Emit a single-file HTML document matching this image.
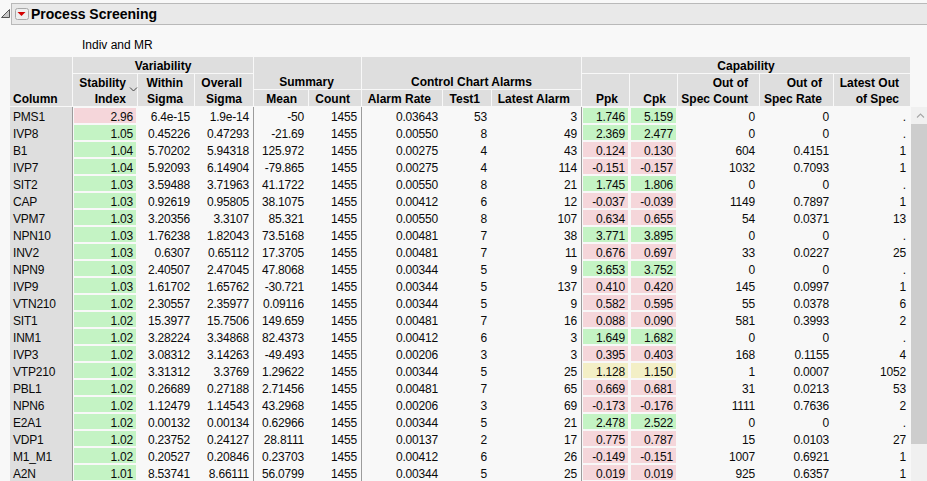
<!DOCTYPE html><html><head><meta charset="utf-8"><style>
html,body{margin:0;padding:0;}
body{width:927px;height:481px;overflow:hidden;background:#f8f8f8;position:relative;font-family:"Liberation Sans",sans-serif;color:#0a0a0a;}
.a{position:absolute;}
.h{position:absolute;background:#dedede;}
.t{position:absolute;white-space:nowrap;font-size:12px;line-height:17px;letter-spacing:-0.2px;}
.b{position:absolute;white-space:nowrap;font-size:12px;font-weight:bold;line-height:16px;color:#000;}
.r{text-align:right;}
.c{text-align:center;}

</style></head><body>
<div class="a" style="left:11px;top:3px;width:920px;height:20px;background:#e9e9e9;border:1px solid #b9b9b9;border-right:none;"></div>
<svg class="a" style="left:0;top:7px" width="12" height="12" viewBox="0 0 12 12"><path d="M1.5 10.5 L9.5 2.5 L9.5 10.5 Z" fill="#c8c8c8" stroke="#555" stroke-width="1" stroke-linejoin="round"/></svg>
<svg class="a" style="left:15px;top:8px" width="14" height="12" viewBox="0 0 14 12"><rect x="0.5" y="0.5" width="13" height="11" rx="2" fill="#eeeeee" stroke="#a8a8a8"/><path d="M2.5 4 L10.5 4 L6.5 8 Z" fill="#d40000"/></svg>
<div class="a" style="left:31px;top:5px;font-size:14px;font-weight:bold;line-height:18px;white-space:nowrap;color:#000">Process Screening</div>
<div class="a" style="left:82px;top:38px;font-size:12px;line-height:15px;white-space:nowrap;color:#000">Indiv and MR</div>
<div class="h" style="left:10px;top:57px;width:62px;height:49px"></div>
<div class="h" style="left:73px;top:57px;width:180px;height:16px"></div>
<div class="b c" style="left:73px;top:58px;width:180px">Variability</div>
<div class="h" style="left:254px;top:57px;width:107px;height:32px"></div>
<div class="b c" style="left:253px;top:74px;width:107px">Summary</div>
<div class="h" style="left:362px;top:57px;width:219px;height:32px"></div>
<div class="b c" style="left:362px;top:74px;width:219px">Control Chart Alarms</div>
<div class="h" style="left:582px;top:57px;width:328px;height:16px"></div>
<div class="b c" style="left:582px;top:58px;width:328px">Capability</div>
<div class="b" style="left:13px;top:91px">Column</div>
<div class="h" style="left:73px;top:74px;width:64px;height:32px"></div>
<div class="b r" style="left:73px;top:75px;width:53px">Stability<br>Index</div>
<div class="h" style="left:138px;top:74px;width:56px;height:32px"></div>
<div class="b r" style="left:138px;top:75px;width:45px">Within<br>Sigma</div>
<div class="h" style="left:195px;top:74px;width:58px;height:32px"></div>
<div class="b r" style="left:195px;top:75px;width:47px">Overall<br>Sigma</div>
<div class="h" style="left:254px;top:90px;width:54px;height:16px"></div>
<div class="b r" style="left:254px;top:91px;width:43px">Mean</div>
<div class="h" style="left:309px;top:90px;width:52px;height:16px"></div>
<div class="b r" style="left:309px;top:91px;width:41px">Count</div>
<div class="h" style="left:362px;top:90px;width:80px;height:16px"></div>
<div class="b r" style="left:362px;top:91px;width:69px">Alarm Rate</div>
<div class="h" style="left:443px;top:90px;width:48px;height:16px"></div>
<div class="b r" style="left:443px;top:91px;width:37px">Test1</div>
<div class="h" style="left:492px;top:90px;width:89px;height:16px"></div>
<div class="b r" style="left:492px;top:91px;width:78px">Latest Alarm</div>
<div class="h" style="left:582px;top:74px;width:47px;height:32px"></div>
<div class="b r" style="left:582px;top:91px;width:36px">Ppk</div>
<div class="h" style="left:630px;top:74px;width:47px;height:32px"></div>
<div class="b r" style="left:630px;top:91px;width:36px">Cpk</div>
<div class="h" style="left:678px;top:74px;width:81px;height:32px"></div>
<div class="b r" style="left:678px;top:75px;width:70px">Out of<br>Spec Count</div>
<div class="h" style="left:760px;top:74px;width:73px;height:32px"></div>
<div class="b r" style="left:760px;top:75px;width:62px">Out of<br>Spec Rate</div>
<div class="h" style="left:834px;top:74px;width:76px;height:32px"></div>
<div class="b r" style="left:834px;top:75px;width:65px">Latest Out<br>of Spec</div>
<svg class="a" style="left:129px;top:86px" width="9" height="7" viewBox="0 0 9 7"><path d="M1 1.5 L4.5 5 L8 1.5" fill="none" stroke="#444" stroke-width="1"/></svg>
<div class="h" style="left:10px;top:107px;width:62px;height:374px"></div>
<div class="a" style="left:72px;top:107px;width:1px;height:374px;background:#9c9c9c"></div>
<div class="a" style="left:253px;top:107px;width:1px;height:374px;background:#9c9c9c"></div>
<div class="a" style="left:361px;top:107px;width:1px;height:374px;background:#9c9c9c"></div>
<div class="a" style="left:581px;top:107px;width:1px;height:374px;background:#9c9c9c"></div>
<div class="t" style="left:13px;top:109px">PMS1</div>
<div class="a" style="left:74px;top:108px;width:62px;height:15px;background:#f5d6da"></div>
<div class="t r" style="left:73px;top:109px;width:60px">2.96</div>
<div class="t r" style="left:138px;top:109px;width:52px">6.4e-15</div>
<div class="t r" style="left:195px;top:109px;width:54px">1.9e-14</div>
<div class="t r" style="left:254px;top:109px;width:50px">-50</div>
<div class="t r" style="left:309px;top:109px;width:48px">1455</div>
<div class="t r" style="left:362px;top:109px;width:76px">0.03643</div>
<div class="t r" style="left:443px;top:109px;width:44px">53</div>
<div class="t r" style="left:492px;top:109px;width:85px">3</div>
<div class="a" style="left:583px;top:108px;width:45px;height:15px;background:#c4f3c4"></div>
<div class="t r" style="left:582px;top:109px;width:43px">1.746</div>
<div class="a" style="left:631px;top:108px;width:45px;height:15px;background:#c4f3c4"></div>
<div class="t r" style="left:630px;top:109px;width:43px">5.159</div>
<div class="t r" style="left:678px;top:109px;width:77px">0</div>
<div class="t r" style="left:760px;top:109px;width:69px">0</div>
<div class="t r" style="left:834px;top:109px;width:72px">.</div>
<div class="t" style="left:13px;top:126px">IVP8</div>
<div class="a" style="left:74px;top:125px;width:62px;height:15px;background:#c4f3c4"></div>
<div class="t r" style="left:73px;top:126px;width:60px">1.05</div>
<div class="t r" style="left:138px;top:126px;width:52px">0.45226</div>
<div class="t r" style="left:195px;top:126px;width:54px">0.47293</div>
<div class="t r" style="left:254px;top:126px;width:50px">-21.69</div>
<div class="t r" style="left:309px;top:126px;width:48px">1455</div>
<div class="t r" style="left:362px;top:126px;width:76px">0.00550</div>
<div class="t r" style="left:443px;top:126px;width:44px">8</div>
<div class="t r" style="left:492px;top:126px;width:85px">49</div>
<div class="a" style="left:583px;top:125px;width:45px;height:15px;background:#c4f3c4"></div>
<div class="t r" style="left:582px;top:126px;width:43px">2.369</div>
<div class="a" style="left:631px;top:125px;width:45px;height:15px;background:#c4f3c4"></div>
<div class="t r" style="left:630px;top:126px;width:43px">2.477</div>
<div class="t r" style="left:678px;top:126px;width:77px">0</div>
<div class="t r" style="left:760px;top:126px;width:69px">0</div>
<div class="t r" style="left:834px;top:126px;width:72px">.</div>
<div class="t" style="left:13px;top:143px">B1</div>
<div class="a" style="left:74px;top:142px;width:62px;height:15px;background:#c4f3c4"></div>
<div class="t r" style="left:73px;top:143px;width:60px">1.04</div>
<div class="t r" style="left:138px;top:143px;width:52px">5.70202</div>
<div class="t r" style="left:195px;top:143px;width:54px">5.94318</div>
<div class="t r" style="left:254px;top:143px;width:50px">125.972</div>
<div class="t r" style="left:309px;top:143px;width:48px">1455</div>
<div class="t r" style="left:362px;top:143px;width:76px">0.00275</div>
<div class="t r" style="left:443px;top:143px;width:44px">4</div>
<div class="t r" style="left:492px;top:143px;width:85px">43</div>
<div class="a" style="left:583px;top:142px;width:45px;height:15px;background:#f5d6da"></div>
<div class="t r" style="left:582px;top:143px;width:43px">0.124</div>
<div class="a" style="left:631px;top:142px;width:45px;height:15px;background:#f5d6da"></div>
<div class="t r" style="left:630px;top:143px;width:43px">0.130</div>
<div class="t r" style="left:678px;top:143px;width:77px">604</div>
<div class="t r" style="left:760px;top:143px;width:69px">0.4151</div>
<div class="t r" style="left:834px;top:143px;width:72px">1</div>
<div class="t" style="left:13px;top:160px">IVP7</div>
<div class="a" style="left:74px;top:159px;width:62px;height:15px;background:#c4f3c4"></div>
<div class="t r" style="left:73px;top:160px;width:60px">1.04</div>
<div class="t r" style="left:138px;top:160px;width:52px">5.92093</div>
<div class="t r" style="left:195px;top:160px;width:54px">6.14904</div>
<div class="t r" style="left:254px;top:160px;width:50px">-79.865</div>
<div class="t r" style="left:309px;top:160px;width:48px">1455</div>
<div class="t r" style="left:362px;top:160px;width:76px">0.00275</div>
<div class="t r" style="left:443px;top:160px;width:44px">4</div>
<div class="t r" style="left:492px;top:160px;width:85px">114</div>
<div class="a" style="left:583px;top:159px;width:45px;height:15px;background:#f5d6da"></div>
<div class="t r" style="left:582px;top:160px;width:43px">-0.151</div>
<div class="a" style="left:631px;top:159px;width:45px;height:15px;background:#f5d6da"></div>
<div class="t r" style="left:630px;top:160px;width:43px">-0.157</div>
<div class="t r" style="left:678px;top:160px;width:77px">1032</div>
<div class="t r" style="left:760px;top:160px;width:69px">0.7093</div>
<div class="t r" style="left:834px;top:160px;width:72px">1</div>
<div class="t" style="left:13px;top:177px">SIT2</div>
<div class="a" style="left:74px;top:176px;width:62px;height:15px;background:#c4f3c4"></div>
<div class="t r" style="left:73px;top:177px;width:60px">1.03</div>
<div class="t r" style="left:138px;top:177px;width:52px">3.59488</div>
<div class="t r" style="left:195px;top:177px;width:54px">3.71963</div>
<div class="t r" style="left:254px;top:177px;width:50px">41.1722</div>
<div class="t r" style="left:309px;top:177px;width:48px">1455</div>
<div class="t r" style="left:362px;top:177px;width:76px">0.00550</div>
<div class="t r" style="left:443px;top:177px;width:44px">8</div>
<div class="t r" style="left:492px;top:177px;width:85px">21</div>
<div class="a" style="left:583px;top:176px;width:45px;height:15px;background:#c4f3c4"></div>
<div class="t r" style="left:582px;top:177px;width:43px">1.745</div>
<div class="a" style="left:631px;top:176px;width:45px;height:15px;background:#c4f3c4"></div>
<div class="t r" style="left:630px;top:177px;width:43px">1.806</div>
<div class="t r" style="left:678px;top:177px;width:77px">0</div>
<div class="t r" style="left:760px;top:177px;width:69px">0</div>
<div class="t r" style="left:834px;top:177px;width:72px">.</div>
<div class="t" style="left:13px;top:194px">CAP</div>
<div class="a" style="left:74px;top:193px;width:62px;height:15px;background:#c4f3c4"></div>
<div class="t r" style="left:73px;top:194px;width:60px">1.03</div>
<div class="t r" style="left:138px;top:194px;width:52px">0.92619</div>
<div class="t r" style="left:195px;top:194px;width:54px">0.95805</div>
<div class="t r" style="left:254px;top:194px;width:50px">38.1075</div>
<div class="t r" style="left:309px;top:194px;width:48px">1455</div>
<div class="t r" style="left:362px;top:194px;width:76px">0.00412</div>
<div class="t r" style="left:443px;top:194px;width:44px">6</div>
<div class="t r" style="left:492px;top:194px;width:85px">12</div>
<div class="a" style="left:583px;top:193px;width:45px;height:15px;background:#f5d6da"></div>
<div class="t r" style="left:582px;top:194px;width:43px">-0.037</div>
<div class="a" style="left:631px;top:193px;width:45px;height:15px;background:#f5d6da"></div>
<div class="t r" style="left:630px;top:194px;width:43px">-0.039</div>
<div class="t r" style="left:678px;top:194px;width:77px">1149</div>
<div class="t r" style="left:760px;top:194px;width:69px">0.7897</div>
<div class="t r" style="left:834px;top:194px;width:72px">1</div>
<div class="t" style="left:13px;top:211px">VPM7</div>
<div class="a" style="left:74px;top:210px;width:62px;height:15px;background:#c4f3c4"></div>
<div class="t r" style="left:73px;top:211px;width:60px">1.03</div>
<div class="t r" style="left:138px;top:211px;width:52px">3.20356</div>
<div class="t r" style="left:195px;top:211px;width:54px">3.3107</div>
<div class="t r" style="left:254px;top:211px;width:50px">85.321</div>
<div class="t r" style="left:309px;top:211px;width:48px">1455</div>
<div class="t r" style="left:362px;top:211px;width:76px">0.00550</div>
<div class="t r" style="left:443px;top:211px;width:44px">8</div>
<div class="t r" style="left:492px;top:211px;width:85px">107</div>
<div class="a" style="left:583px;top:210px;width:45px;height:15px;background:#f5d6da"></div>
<div class="t r" style="left:582px;top:211px;width:43px">0.634</div>
<div class="a" style="left:631px;top:210px;width:45px;height:15px;background:#f5d6da"></div>
<div class="t r" style="left:630px;top:211px;width:43px">0.655</div>
<div class="t r" style="left:678px;top:211px;width:77px">54</div>
<div class="t r" style="left:760px;top:211px;width:69px">0.0371</div>
<div class="t r" style="left:834px;top:211px;width:72px">13</div>
<div class="t" style="left:13px;top:228px">NPN10</div>
<div class="a" style="left:74px;top:227px;width:62px;height:15px;background:#c4f3c4"></div>
<div class="t r" style="left:73px;top:228px;width:60px">1.03</div>
<div class="t r" style="left:138px;top:228px;width:52px">1.76238</div>
<div class="t r" style="left:195px;top:228px;width:54px">1.82043</div>
<div class="t r" style="left:254px;top:228px;width:50px">73.5168</div>
<div class="t r" style="left:309px;top:228px;width:48px">1455</div>
<div class="t r" style="left:362px;top:228px;width:76px">0.00481</div>
<div class="t r" style="left:443px;top:228px;width:44px">7</div>
<div class="t r" style="left:492px;top:228px;width:85px">38</div>
<div class="a" style="left:583px;top:227px;width:45px;height:15px;background:#c4f3c4"></div>
<div class="t r" style="left:582px;top:228px;width:43px">3.771</div>
<div class="a" style="left:631px;top:227px;width:45px;height:15px;background:#c4f3c4"></div>
<div class="t r" style="left:630px;top:228px;width:43px">3.895</div>
<div class="t r" style="left:678px;top:228px;width:77px">0</div>
<div class="t r" style="left:760px;top:228px;width:69px">0</div>
<div class="t r" style="left:834px;top:228px;width:72px">.</div>
<div class="t" style="left:13px;top:245px">INV2</div>
<div class="a" style="left:74px;top:244px;width:62px;height:15px;background:#c4f3c4"></div>
<div class="t r" style="left:73px;top:245px;width:60px">1.03</div>
<div class="t r" style="left:138px;top:245px;width:52px">0.6307</div>
<div class="t r" style="left:195px;top:245px;width:54px">0.65112</div>
<div class="t r" style="left:254px;top:245px;width:50px">17.3705</div>
<div class="t r" style="left:309px;top:245px;width:48px">1455</div>
<div class="t r" style="left:362px;top:245px;width:76px">0.00481</div>
<div class="t r" style="left:443px;top:245px;width:44px">7</div>
<div class="t r" style="left:492px;top:245px;width:85px">11</div>
<div class="a" style="left:583px;top:244px;width:45px;height:15px;background:#f5d6da"></div>
<div class="t r" style="left:582px;top:245px;width:43px">0.676</div>
<div class="a" style="left:631px;top:244px;width:45px;height:15px;background:#f5d6da"></div>
<div class="t r" style="left:630px;top:245px;width:43px">0.697</div>
<div class="t r" style="left:678px;top:245px;width:77px">33</div>
<div class="t r" style="left:760px;top:245px;width:69px">0.0227</div>
<div class="t r" style="left:834px;top:245px;width:72px">25</div>
<div class="t" style="left:13px;top:262px">NPN9</div>
<div class="a" style="left:74px;top:261px;width:62px;height:15px;background:#c4f3c4"></div>
<div class="t r" style="left:73px;top:262px;width:60px">1.03</div>
<div class="t r" style="left:138px;top:262px;width:52px">2.40507</div>
<div class="t r" style="left:195px;top:262px;width:54px">2.47045</div>
<div class="t r" style="left:254px;top:262px;width:50px">47.8068</div>
<div class="t r" style="left:309px;top:262px;width:48px">1455</div>
<div class="t r" style="left:362px;top:262px;width:76px">0.00344</div>
<div class="t r" style="left:443px;top:262px;width:44px">5</div>
<div class="t r" style="left:492px;top:262px;width:85px">9</div>
<div class="a" style="left:583px;top:261px;width:45px;height:15px;background:#c4f3c4"></div>
<div class="t r" style="left:582px;top:262px;width:43px">3.653</div>
<div class="a" style="left:631px;top:261px;width:45px;height:15px;background:#c4f3c4"></div>
<div class="t r" style="left:630px;top:262px;width:43px">3.752</div>
<div class="t r" style="left:678px;top:262px;width:77px">0</div>
<div class="t r" style="left:760px;top:262px;width:69px">0</div>
<div class="t r" style="left:834px;top:262px;width:72px">.</div>
<div class="t" style="left:13px;top:279px">IVP9</div>
<div class="a" style="left:74px;top:278px;width:62px;height:15px;background:#c4f3c4"></div>
<div class="t r" style="left:73px;top:279px;width:60px">1.03</div>
<div class="t r" style="left:138px;top:279px;width:52px">1.61702</div>
<div class="t r" style="left:195px;top:279px;width:54px">1.65762</div>
<div class="t r" style="left:254px;top:279px;width:50px">-30.721</div>
<div class="t r" style="left:309px;top:279px;width:48px">1455</div>
<div class="t r" style="left:362px;top:279px;width:76px">0.00344</div>
<div class="t r" style="left:443px;top:279px;width:44px">5</div>
<div class="t r" style="left:492px;top:279px;width:85px">137</div>
<div class="a" style="left:583px;top:278px;width:45px;height:15px;background:#f5d6da"></div>
<div class="t r" style="left:582px;top:279px;width:43px">0.410</div>
<div class="a" style="left:631px;top:278px;width:45px;height:15px;background:#f5d6da"></div>
<div class="t r" style="left:630px;top:279px;width:43px">0.420</div>
<div class="t r" style="left:678px;top:279px;width:77px">145</div>
<div class="t r" style="left:760px;top:279px;width:69px">0.0997</div>
<div class="t r" style="left:834px;top:279px;width:72px">1</div>
<div class="t" style="left:13px;top:296px">VTN210</div>
<div class="a" style="left:74px;top:295px;width:62px;height:15px;background:#c4f3c4"></div>
<div class="t r" style="left:73px;top:296px;width:60px">1.02</div>
<div class="t r" style="left:138px;top:296px;width:52px">2.30557</div>
<div class="t r" style="left:195px;top:296px;width:54px">2.35977</div>
<div class="t r" style="left:254px;top:296px;width:50px">0.09116</div>
<div class="t r" style="left:309px;top:296px;width:48px">1455</div>
<div class="t r" style="left:362px;top:296px;width:76px">0.00344</div>
<div class="t r" style="left:443px;top:296px;width:44px">5</div>
<div class="t r" style="left:492px;top:296px;width:85px">9</div>
<div class="a" style="left:583px;top:295px;width:45px;height:15px;background:#f5d6da"></div>
<div class="t r" style="left:582px;top:296px;width:43px">0.582</div>
<div class="a" style="left:631px;top:295px;width:45px;height:15px;background:#f5d6da"></div>
<div class="t r" style="left:630px;top:296px;width:43px">0.595</div>
<div class="t r" style="left:678px;top:296px;width:77px">55</div>
<div class="t r" style="left:760px;top:296px;width:69px">0.0378</div>
<div class="t r" style="left:834px;top:296px;width:72px">6</div>
<div class="t" style="left:13px;top:313px">SIT1</div>
<div class="a" style="left:74px;top:312px;width:62px;height:15px;background:#c4f3c4"></div>
<div class="t r" style="left:73px;top:313px;width:60px">1.02</div>
<div class="t r" style="left:138px;top:313px;width:52px">15.3977</div>
<div class="t r" style="left:195px;top:313px;width:54px">15.7506</div>
<div class="t r" style="left:254px;top:313px;width:50px">149.659</div>
<div class="t r" style="left:309px;top:313px;width:48px">1455</div>
<div class="t r" style="left:362px;top:313px;width:76px">0.00481</div>
<div class="t r" style="left:443px;top:313px;width:44px">7</div>
<div class="t r" style="left:492px;top:313px;width:85px">16</div>
<div class="a" style="left:583px;top:312px;width:45px;height:15px;background:#f5d6da"></div>
<div class="t r" style="left:582px;top:313px;width:43px">0.088</div>
<div class="a" style="left:631px;top:312px;width:45px;height:15px;background:#f5d6da"></div>
<div class="t r" style="left:630px;top:313px;width:43px">0.090</div>
<div class="t r" style="left:678px;top:313px;width:77px">581</div>
<div class="t r" style="left:760px;top:313px;width:69px">0.3993</div>
<div class="t r" style="left:834px;top:313px;width:72px">2</div>
<div class="t" style="left:13px;top:330px">INM1</div>
<div class="a" style="left:74px;top:329px;width:62px;height:15px;background:#c4f3c4"></div>
<div class="t r" style="left:73px;top:330px;width:60px">1.02</div>
<div class="t r" style="left:138px;top:330px;width:52px">3.28224</div>
<div class="t r" style="left:195px;top:330px;width:54px">3.34868</div>
<div class="t r" style="left:254px;top:330px;width:50px">82.4373</div>
<div class="t r" style="left:309px;top:330px;width:48px">1455</div>
<div class="t r" style="left:362px;top:330px;width:76px">0.00412</div>
<div class="t r" style="left:443px;top:330px;width:44px">6</div>
<div class="t r" style="left:492px;top:330px;width:85px">3</div>
<div class="a" style="left:583px;top:329px;width:45px;height:15px;background:#c4f3c4"></div>
<div class="t r" style="left:582px;top:330px;width:43px">1.649</div>
<div class="a" style="left:631px;top:329px;width:45px;height:15px;background:#c4f3c4"></div>
<div class="t r" style="left:630px;top:330px;width:43px">1.682</div>
<div class="t r" style="left:678px;top:330px;width:77px">0</div>
<div class="t r" style="left:760px;top:330px;width:69px">0</div>
<div class="t r" style="left:834px;top:330px;width:72px">.</div>
<div class="t" style="left:13px;top:347px">IVP3</div>
<div class="a" style="left:74px;top:346px;width:62px;height:15px;background:#c4f3c4"></div>
<div class="t r" style="left:73px;top:347px;width:60px">1.02</div>
<div class="t r" style="left:138px;top:347px;width:52px">3.08312</div>
<div class="t r" style="left:195px;top:347px;width:54px">3.14263</div>
<div class="t r" style="left:254px;top:347px;width:50px">-49.493</div>
<div class="t r" style="left:309px;top:347px;width:48px">1455</div>
<div class="t r" style="left:362px;top:347px;width:76px">0.00206</div>
<div class="t r" style="left:443px;top:347px;width:44px">3</div>
<div class="t r" style="left:492px;top:347px;width:85px">3</div>
<div class="a" style="left:583px;top:346px;width:45px;height:15px;background:#f5d6da"></div>
<div class="t r" style="left:582px;top:347px;width:43px">0.395</div>
<div class="a" style="left:631px;top:346px;width:45px;height:15px;background:#f5d6da"></div>
<div class="t r" style="left:630px;top:347px;width:43px">0.403</div>
<div class="t r" style="left:678px;top:347px;width:77px">168</div>
<div class="t r" style="left:760px;top:347px;width:69px">0.1155</div>
<div class="t r" style="left:834px;top:347px;width:72px">4</div>
<div class="t" style="left:13px;top:364px">VTP210</div>
<div class="a" style="left:74px;top:363px;width:62px;height:15px;background:#c4f3c4"></div>
<div class="t r" style="left:73px;top:364px;width:60px">1.02</div>
<div class="t r" style="left:138px;top:364px;width:52px">3.31312</div>
<div class="t r" style="left:195px;top:364px;width:54px">3.3769</div>
<div class="t r" style="left:254px;top:364px;width:50px">1.29622</div>
<div class="t r" style="left:309px;top:364px;width:48px">1455</div>
<div class="t r" style="left:362px;top:364px;width:76px">0.00344</div>
<div class="t r" style="left:443px;top:364px;width:44px">5</div>
<div class="t r" style="left:492px;top:364px;width:85px">25</div>
<div class="a" style="left:583px;top:363px;width:45px;height:15px;background:#f3efc6"></div>
<div class="t r" style="left:582px;top:364px;width:43px">1.128</div>
<div class="a" style="left:631px;top:363px;width:45px;height:15px;background:#f3efc6"></div>
<div class="t r" style="left:630px;top:364px;width:43px">1.150</div>
<div class="t r" style="left:678px;top:364px;width:77px">1</div>
<div class="t r" style="left:760px;top:364px;width:69px">0.0007</div>
<div class="t r" style="left:834px;top:364px;width:72px">1052</div>
<div class="t" style="left:13px;top:381px">PBL1</div>
<div class="a" style="left:74px;top:380px;width:62px;height:15px;background:#c4f3c4"></div>
<div class="t r" style="left:73px;top:381px;width:60px">1.02</div>
<div class="t r" style="left:138px;top:381px;width:52px">0.26689</div>
<div class="t r" style="left:195px;top:381px;width:54px">0.27188</div>
<div class="t r" style="left:254px;top:381px;width:50px">2.71456</div>
<div class="t r" style="left:309px;top:381px;width:48px">1455</div>
<div class="t r" style="left:362px;top:381px;width:76px">0.00481</div>
<div class="t r" style="left:443px;top:381px;width:44px">7</div>
<div class="t r" style="left:492px;top:381px;width:85px">65</div>
<div class="a" style="left:583px;top:380px;width:45px;height:15px;background:#f5d6da"></div>
<div class="t r" style="left:582px;top:381px;width:43px">0.669</div>
<div class="a" style="left:631px;top:380px;width:45px;height:15px;background:#f5d6da"></div>
<div class="t r" style="left:630px;top:381px;width:43px">0.681</div>
<div class="t r" style="left:678px;top:381px;width:77px">31</div>
<div class="t r" style="left:760px;top:381px;width:69px">0.0213</div>
<div class="t r" style="left:834px;top:381px;width:72px">53</div>
<div class="t" style="left:13px;top:398px">NPN6</div>
<div class="a" style="left:74px;top:397px;width:62px;height:15px;background:#c4f3c4"></div>
<div class="t r" style="left:73px;top:398px;width:60px">1.02</div>
<div class="t r" style="left:138px;top:398px;width:52px">1.12479</div>
<div class="t r" style="left:195px;top:398px;width:54px">1.14543</div>
<div class="t r" style="left:254px;top:398px;width:50px">43.2968</div>
<div class="t r" style="left:309px;top:398px;width:48px">1455</div>
<div class="t r" style="left:362px;top:398px;width:76px">0.00206</div>
<div class="t r" style="left:443px;top:398px;width:44px">3</div>
<div class="t r" style="left:492px;top:398px;width:85px">69</div>
<div class="a" style="left:583px;top:397px;width:45px;height:15px;background:#f5d6da"></div>
<div class="t r" style="left:582px;top:398px;width:43px">-0.173</div>
<div class="a" style="left:631px;top:397px;width:45px;height:15px;background:#f5d6da"></div>
<div class="t r" style="left:630px;top:398px;width:43px">-0.176</div>
<div class="t r" style="left:678px;top:398px;width:77px">1111</div>
<div class="t r" style="left:760px;top:398px;width:69px">0.7636</div>
<div class="t r" style="left:834px;top:398px;width:72px">2</div>
<div class="t" style="left:13px;top:415px">E2A1</div>
<div class="a" style="left:74px;top:414px;width:62px;height:15px;background:#c4f3c4"></div>
<div class="t r" style="left:73px;top:415px;width:60px">1.02</div>
<div class="t r" style="left:138px;top:415px;width:52px">0.00132</div>
<div class="t r" style="left:195px;top:415px;width:54px">0.00134</div>
<div class="t r" style="left:254px;top:415px;width:50px">0.62966</div>
<div class="t r" style="left:309px;top:415px;width:48px">1455</div>
<div class="t r" style="left:362px;top:415px;width:76px">0.00344</div>
<div class="t r" style="left:443px;top:415px;width:44px">5</div>
<div class="t r" style="left:492px;top:415px;width:85px">21</div>
<div class="a" style="left:583px;top:414px;width:45px;height:15px;background:#c4f3c4"></div>
<div class="t r" style="left:582px;top:415px;width:43px">2.478</div>
<div class="a" style="left:631px;top:414px;width:45px;height:15px;background:#c4f3c4"></div>
<div class="t r" style="left:630px;top:415px;width:43px">2.522</div>
<div class="t r" style="left:678px;top:415px;width:77px">0</div>
<div class="t r" style="left:760px;top:415px;width:69px">0</div>
<div class="t r" style="left:834px;top:415px;width:72px">.</div>
<div class="t" style="left:13px;top:432px">VDP1</div>
<div class="a" style="left:74px;top:431px;width:62px;height:15px;background:#c4f3c4"></div>
<div class="t r" style="left:73px;top:432px;width:60px">1.02</div>
<div class="t r" style="left:138px;top:432px;width:52px">0.23752</div>
<div class="t r" style="left:195px;top:432px;width:54px">0.24127</div>
<div class="t r" style="left:254px;top:432px;width:50px">28.8111</div>
<div class="t r" style="left:309px;top:432px;width:48px">1455</div>
<div class="t r" style="left:362px;top:432px;width:76px">0.00137</div>
<div class="t r" style="left:443px;top:432px;width:44px">2</div>
<div class="t r" style="left:492px;top:432px;width:85px">17</div>
<div class="a" style="left:583px;top:431px;width:45px;height:15px;background:#f5d6da"></div>
<div class="t r" style="left:582px;top:432px;width:43px">0.775</div>
<div class="a" style="left:631px;top:431px;width:45px;height:15px;background:#f5d6da"></div>
<div class="t r" style="left:630px;top:432px;width:43px">0.787</div>
<div class="t r" style="left:678px;top:432px;width:77px">15</div>
<div class="t r" style="left:760px;top:432px;width:69px">0.0103</div>
<div class="t r" style="left:834px;top:432px;width:72px">27</div>
<div class="t" style="left:13px;top:449px">M1_M1</div>
<div class="a" style="left:74px;top:448px;width:62px;height:15px;background:#c4f3c4"></div>
<div class="t r" style="left:73px;top:449px;width:60px">1.02</div>
<div class="t r" style="left:138px;top:449px;width:52px">0.20527</div>
<div class="t r" style="left:195px;top:449px;width:54px">0.20846</div>
<div class="t r" style="left:254px;top:449px;width:50px">0.23703</div>
<div class="t r" style="left:309px;top:449px;width:48px">1455</div>
<div class="t r" style="left:362px;top:449px;width:76px">0.00412</div>
<div class="t r" style="left:443px;top:449px;width:44px">6</div>
<div class="t r" style="left:492px;top:449px;width:85px">26</div>
<div class="a" style="left:583px;top:448px;width:45px;height:15px;background:#f5d6da"></div>
<div class="t r" style="left:582px;top:449px;width:43px">-0.149</div>
<div class="a" style="left:631px;top:448px;width:45px;height:15px;background:#f5d6da"></div>
<div class="t r" style="left:630px;top:449px;width:43px">-0.151</div>
<div class="t r" style="left:678px;top:449px;width:77px">1007</div>
<div class="t r" style="left:760px;top:449px;width:69px">0.6921</div>
<div class="t r" style="left:834px;top:449px;width:72px">1</div>
<div class="t" style="left:13px;top:466px">A2N</div>
<div class="a" style="left:74px;top:465px;width:62px;height:15px;background:#c4f3c4"></div>
<div class="t r" style="left:73px;top:466px;width:60px">1.01</div>
<div class="t r" style="left:138px;top:466px;width:52px">8.53741</div>
<div class="t r" style="left:195px;top:466px;width:54px">8.66111</div>
<div class="t r" style="left:254px;top:466px;width:50px">56.0799</div>
<div class="t r" style="left:309px;top:466px;width:48px">1455</div>
<div class="t r" style="left:362px;top:466px;width:76px">0.00344</div>
<div class="t r" style="left:443px;top:466px;width:44px">5</div>
<div class="t r" style="left:492px;top:466px;width:85px">25</div>
<div class="a" style="left:583px;top:465px;width:45px;height:15px;background:#f5d6da"></div>
<div class="t r" style="left:582px;top:466px;width:43px">0.019</div>
<div class="a" style="left:631px;top:465px;width:45px;height:15px;background:#f5d6da"></div>
<div class="t r" style="left:630px;top:466px;width:43px">0.019</div>
<div class="t r" style="left:678px;top:466px;width:77px">925</div>
<div class="t r" style="left:760px;top:466px;width:69px">0.6357</div>
<div class="t r" style="left:834px;top:466px;width:72px">1</div>
<div class="a" style="left:911px;top:107px;width:16px;height:374px;background:#f0f0f0"></div>
<div class="a" style="left:911px;top:124px;width:16px;height:320px;background:#cdcdcd"></div>
<svg class="a" style="left:911px;top:107px" width="16" height="17" viewBox="0 0 16 17"><path d="M6 10.5 L9.5 7 L13 10.5" fill="none" stroke="#a6a6a6" stroke-width="1.1"/></svg>
</body></html>
